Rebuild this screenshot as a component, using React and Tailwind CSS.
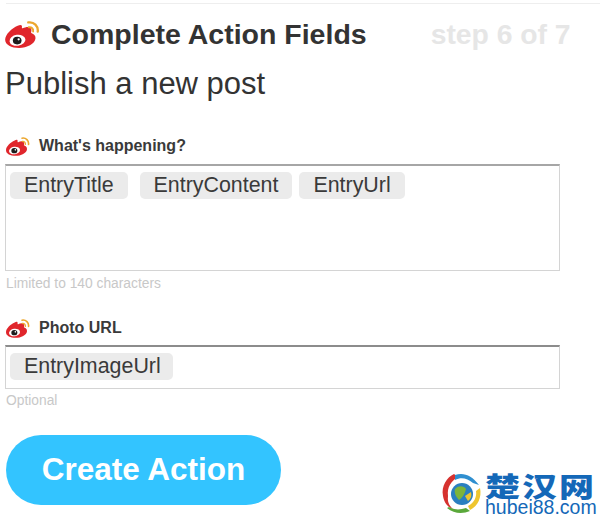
import React from 'react';

const WeiboIcon = ({ className }) => (
  <svg viewBox="0 0 36 28" className={className}>
    <path d="M13 5C7 7.500 0 14 0 19.500 0 24.800 6.500 28 14.500 28c8 0 16.500-4 17-10 .3-3-2-4.800-4-5.400-1-.3-.6-1.200-.3-2 .5-2.200-.6-4-2.700-4.300-2.200-.3-4.400.5-6.200 1.200-.9.300-1.100 0-.9-1 .5-2.500-1.400-3.300-4.400-1.500z" fill="#e0262c" />
    <ellipse cx="12.800" cy="20" rx="8.300" ry="5.700" fill="#fff" transform="rotate(-8 12.800 20)" />
    <ellipse cx="12.500" cy="20.300" rx="4.500" ry="4" fill="#1c1c1c" />
    <circle cx="14" cy="19" r="1.200" fill="#fff" />
    <path d="M24 1.500c6-1 10.500 3.800 9.800 9.500" fill="none" stroke="#eca72e" strokeWidth="2.400" strokeLinecap="round" />
    <path d="M24.500 6.500c3-.5 5 1.600 4.500 4.400" fill="none" stroke="#eca72e" strokeWidth="2" strokeLinecap="round" />
  </svg>
);

const Token = ({ children, className = 'pr-[14px]' }) => (
  <span className={`bg-[#ebebeb] rounded-[5px] pl-[14px] h-[27px] flex items-center text-[21.400px] text-[#3a3a3a] ${className}`}>
    {children}
  </span>
);

const FieldLabel = ({ children }) => (
  <div className="flex items-center gap-[9px] pl-[6px] h-[22px]">
    <WeiboIcon className="w-[24px] h-[19px]" />
    <span className="text-[16px] font-bold text-[#3a3a3a]">{children}</span>
  </div>
);

const App = () => {
  return (
    <div className="relative w-[600px] h-[519px] bg-white overflow-hidden font-['Liberation_Sans',Arial,sans-serif]">
      <div className="ml-[6px] pt-[3px]">
        <div className="h-[1px] bg-[#eeeeee]" />
      </div>

      <div className="flex items-center h-[30px] mt-[15px] pl-[5px]">
        <WeiboIcon className="w-[35px] h-[27px]" />
        <h1 className="ml-[11px] text-[28.500px] font-bold text-[#333333]">Complete Action Fields</h1>
        <span className="ml-[64px] text-[28.300px] font-bold text-[#e6e6e6]">step 6 of 7</span>
      </div>

      <h2 className="pl-[5px] mt-[17px] h-[36px] text-[31px] leading-[36px] text-[#333333]">Publish a new post</h2>

      <div className="mt-[33px]">
        <FieldLabel>What's happening?</FieldLabel>
      </div>
      <div className="ml-[5px] mt-[7px] w-[555px] h-[107px] border border-[#d4d4d4] border-t-2 border-t-[#a6a6a6] pt-[6px] pl-[4px] flex items-start gap-[12px]">
        <Token>EntryTitle</Token>
        <div className="flex gap-[7px]">
          <Token>EntryContent</Token>
          <Token>EntryUrl</Token>
        </div>
      </div>
      <p className="pl-[6px] mt-[5px] text-[13.800px] leading-[16px] text-[#c8c8c8]">Limited to 140 characters</p>

      <div className="mt-[25px]">
        <FieldLabel>Photo URL</FieldLabel>
      </div>
      <div className="ml-[5px] mt-[6px] w-[555px] h-[44px] border border-[#d4d4d4] border-t-2 border-t-[#8c8c8c] pt-[6px] pl-[4px] flex items-start">
        <Token className="pr-[12px]">EntryImageUrl</Token>
      </div>
      <p className="pl-[6px] mt-[4px] text-[13.800px] leading-[16px] text-[#c8c8c8]">Optional</p>

      <button className="block ml-[6px] mt-[26px] w-[275px] h-[70px] rounded-[35px] bg-[#33c4ff] text-white text-[31.500px] font-bold">
        Create Action
      </button>

      <div className="absolute left-[441px] top-[471px] flex items-start">
        <svg viewBox="0 0 42 44" className="w-[42px] h-[44px] mt-[1px]">
          <circle cx="21" cy="22" r="11" fill="#2a7fc0" />
          <path d="M14 17c4-4 9-3 11 0-1 5-4 9-7 11-3-3-5-7-4-11z" fill="#7db43a" />
          <path d="M24 24l6-4c1 4 0 7-3 9z" fill="#eec52f" />
          <path d="M2 24C0 14 6 5 13 2l4 3C10 9 6 15 7 24c-1 8 3 11 5 13-6-2-9-7-10-13z" fill="#d6322f" />
          <path d="M14 3c8-3 17 0 24 10l-6-2C26 6 20 5 14 8z" fill="#2f8fd0" />
          <path d="M39 16c2 9-2 18-10 22l-2-4c6-3 9-9 8-15z" fill="#eec52f" />
          <path d="M6 36c7 6 16 6 23 3l-4-3c-6 2-12 2-17-1z" fill="#5aa83a" />
        </svg>
        <div className="ml-[2px] w-[115px]">
          <div className="h-[28px] text-[35px] leading-[28px] font-black tracking-[2px] text-[#1468b8] font-['Noto_Sans_CJK_SC',sans-serif] whitespace-nowrap scale-y-[0.78]">楚汉网</div>
          <div className="text-[19.500px] leading-[16px] text-[#1468b8] whitespace-nowrap">hubei88.com</div>
        </div>
      </div>
    </div>
  );
};

export default App;
